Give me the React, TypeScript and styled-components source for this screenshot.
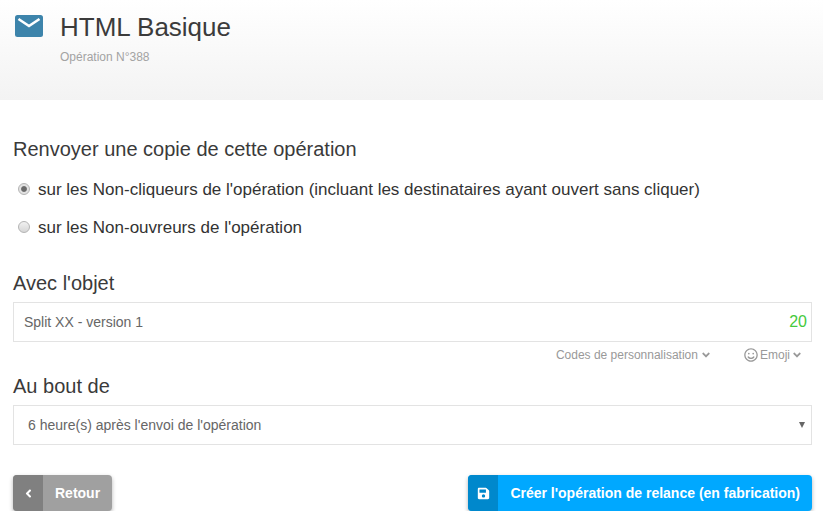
import styled, { createGlobalStyle } from 'styled-components'
import { FaAngleDown, FaAngleLeft, FaRegSmile, FaSave } from 'react-icons/fa'

const GlobalStyle = createGlobalStyle`
  html, body {
    margin: 0;
    padding: 0;
    background: #fff;
    font-family: "Liberation Sans", Arial, sans-serif;
    color: #333;
  }
`

const Header = styled.header`
  display: flex;
  gap: 17px;
  height: 100px;
  box-sizing: border-box;
  padding: 15px 15px 0;
  background: linear-gradient(to bottom, #ffffff, #f3f3f3);
`

const MailIcon = styled.svg`
  width: 28px;
  height: 22px;
  flex: none;
`

const HeaderText = styled.div`
  display: flex;
  flex-direction: column;
`

const Title = styled.h1`
  margin: -3px 0 0;
  font-size: 26px;
  line-height: 30px;
  font-weight: 400;
  color: #3b3b3b;
`

const Subtitle = styled.div`
  margin-top: 8px;
  font-size: 12px;
  line-height: 15px;
  color: #a3a3a3;
`

const Main = styled.main`
  padding: 37px 11px 0 13px;
`

const Heading = styled.h2`
  margin: 0;
  font-size: 20px;
  line-height: 24px;
  font-weight: 400;
  color: #3a3a3a;
`

const RadioList = styled.div`
  display: flex;
  flex-direction: column;
  gap: 16px;
  margin: 18px 0 32px;
  padding-left: 5px;
`

const RadioRow = styled.label`
  display: flex;
  align-items: center;
  gap: 8px;
  font-size: 17px;
  line-height: 22px;
  color: #333;
`

const Radio = styled.input`
  appearance: none;
  box-sizing: border-box;
  width: 12px;
  height: 12px;
  margin: 0 0 3px;
  border-radius: 50%;
  border: 1px solid #b4b4b4;
  background: linear-gradient(to bottom, #f1f1f1, #d6d6d6);

  &:checked {
    background: radial-gradient(circle, #6a6a6a 0 2.4px, #e2e2e2 3.4px);
  }
`

const SubjectField = styled.div`
  position: relative;
  margin-top: 7px;
`

const TextInput = styled.input`
  display: block;
  width: 100%;
  height: 40px;
  box-sizing: border-box;
  padding: 0 40px 0 10px;
  border: 1px solid #e3e3e3;
  outline: none;
  background: #fff;
  font-family: inherit;
  font-size: 14px;
  color: #666;
`

const Counter = styled.span`
  position: absolute;
  right: 5px;
  top: 10px;
  font-size: 16px;
  line-height: 20px;
  color: #45c93c;
`

const Tools = styled.div`
  display: flex;
  justify-content: flex-end;
  gap: 32px;
  height: 26px;
  margin-bottom: 6px;
  padding-right: 9px;
  align-items: center;
`

const Tool = styled.span`
  display: inline-flex;
  align-items: center;
  font-size: 12px;
  color: #999;

  svg {
    flex: none;
  }
`

const Chevron = styled(FaAngleDown)<{ $gap: number }>`
  margin-left: ${p => p.$gap}px;
`

const Smile = styled(FaRegSmile)`
  margin-right: 2px;
`

const SelectField = styled.div`
  position: relative;
  margin-top: 7px;
`

const Select = styled.select`
  display: block;
  width: 100%;
  height: 40px;
  box-sizing: border-box;
  padding: 0 24px 0 14px;
  border: 1px solid #e3e3e3;
  border-radius: 0;
  outline: none;
  appearance: none;
  background: #fff;
  font-family: inherit;
  font-size: 14px;
  color: #666;
`

const SelectArrow = styled.span`
  position: absolute;
  right: 7px;
  top: 17px;
  width: 0;
  height: 0;
  border-left: 3px solid transparent;
  border-right: 3px solid transparent;
  border-top: 6px solid #666;
`

const Actions = styled.div`
  display: flex;
  justify-content: space-between;
  margin-top: 30px;
`

const Button = styled.button<{ $main: string; $side: string }>`
  display: flex;
  align-items: stretch;
  height: 36px;
  padding: 0;
  border: none;
  border-radius: 4px;
  overflow: hidden;
  background: ${p => p.$main};
  box-shadow: 0 2px 4px rgba(0, 0, 0, 0.3);
  color: #fff;
  font-family: "Liberation Sans", Arial, sans-serif;
  font-size: 14px;
  font-weight: 700;

  > span:first-child {
    display: flex;
    align-items: center;
    justify-content: center;
    width: 30px;
    background: ${p => p.$side};
  }
`

const ButtonLabel = styled.span`
  display: flex;
  align-items: center;
  padding: 0 12px;
`

export default function App() {
  return (
    <>
      <GlobalStyle />
      <Header>
        <MailIcon viewBox="0 0 28 22">
          <rect width="28" height="22" rx="2.5" fill="#3d84ab" />
          <path d="M3.5 4l10.5 7 10.500-7" fill="none" stroke="#fff" strokeWidth="2.6" />
        </MailIcon>
        <HeaderText>
          <Title>HTML Basique</Title>
          <Subtitle>Opération N°388</Subtitle>
        </HeaderText>
      </Header>
      <Main>
        <Heading>Renvoyer une copie de cette opération</Heading>
        <RadioList>
          <RadioRow>
            <Radio type="radio" name="target" defaultChecked />
            sur les Non-cliqueurs de l'opération (incluant les destinataires ayant ouvert sans cliquer)
          </RadioRow>
          <RadioRow>
            <Radio type="radio" name="target" />
            sur les Non-ouvreurs de l'opération
          </RadioRow>
        </RadioList>
        <Heading>Avec l'objet</Heading>
        <SubjectField>
          <TextInput defaultValue="Split XX - version 1" />
          <Counter>20</Counter>
        </SubjectField>
        <Tools>
          <Tool>
            Codes de personnalisation
            <Chevron size={12} $gap={2} />
          </Tool>
          <Tool>
            <Smile size={14} />
            Emoji
            <Chevron size={12} $gap={1} />
          </Tool>
        </Tools>
        <Heading>Au bout de</Heading>
        <SelectField>
          <Select defaultValue="6">
            <option value="6">6 heure(s) après l'envoi de l'opération</option>
          </Select>
          <SelectArrow />
        </SelectField>
        <Actions>
          <Button $main="#a0a0a0" $side="#808080">
            <span>
              <FaAngleLeft size={13} />
            </span>
            <ButtonLabel>Retour</ButtonLabel>
          </Button>
          <Button $main="#00a8ff" $side="#0088cc">
            <span>
              <FaSave size={13} />
            </span>
            <ButtonLabel>Créer l'opération de relance (en fabrication)</ButtonLabel>
          </Button>
        </Actions>
      </Main>
    </>
  )
}
